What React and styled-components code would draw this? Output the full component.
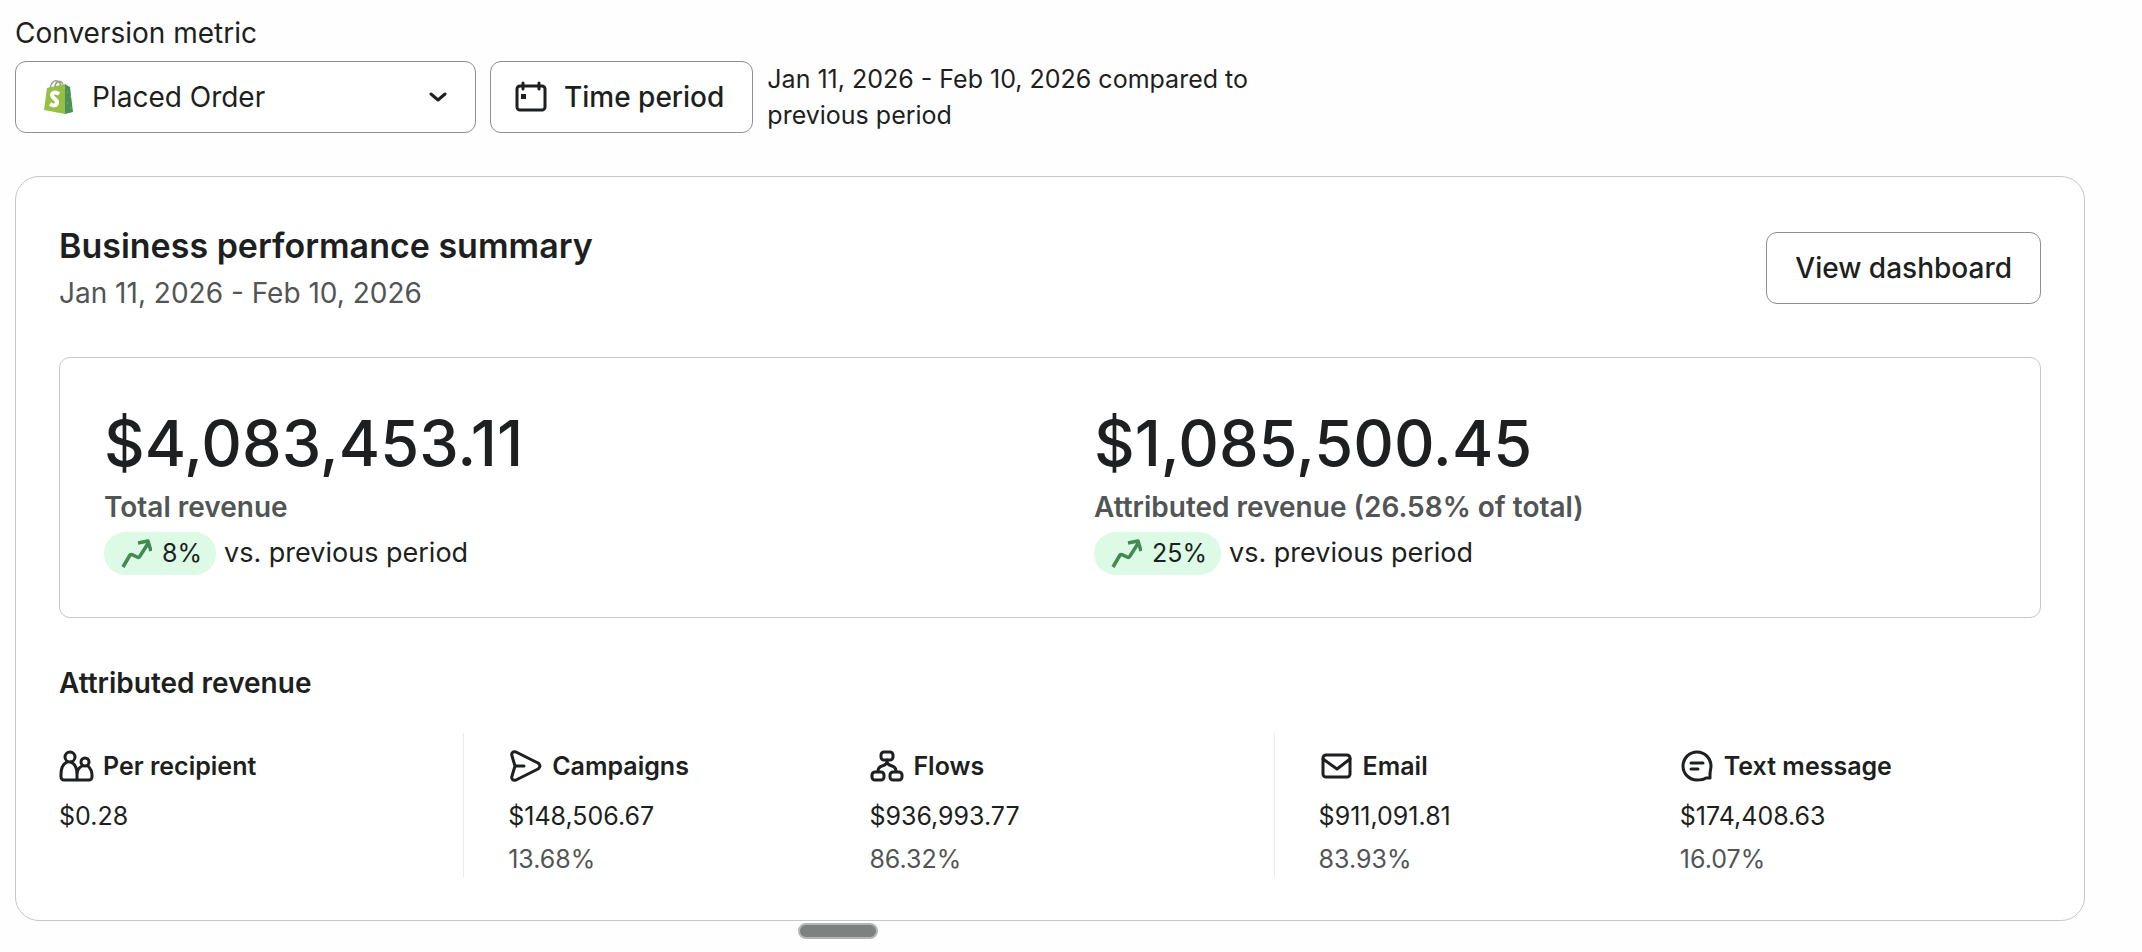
import React from 'react';
import styled, { createGlobalStyle } from 'styled-components';

const GlobalStyle = createGlobalStyle`
  *, *::before, *::after {
    box-sizing: border-box;
  }

  body {
    margin: 0;
    background: #fefefe;
    color: #1d1f20;
    font-family: Inter, 'Liberation Sans', sans-serif;
    font-size: 28px;
    line-height: 36px;
  }

  h1, h2, p, dl, dt, dd {
    margin: 0;
  }
`;

// Styled Components
const Page = styled.main`
  padding: 15px 57px 0 15px;
`;

const Toolbar = styled.div`
  display: flex;
  align-items: flex-end;
  gap: 14px;
`;

const Field = styled.div`
  display: flex;
  flex-direction: column;
  gap: 9px;
  width: 461px;
`;

const FieldLabel = styled.label`
  font-size: 28px;
  line-height: 37px;
`;

const SelectBox = styled.div`
  display: grid;
  grid-template-columns: 76px 1fr 62px;
  align-items: center;
  height: 72px;
  border: 1px solid #8d8f90;
  border-radius: 11px;
  background: #fff;
`;

const SelectIcon = styled.span`
  display: flex;
  grid-row: 1;
  grid-column: ${props => props.$column};
  padding-left: ${props => (props.$column === 3 ? '16px' : '0')};
  pointer-events: none;
`;

const Select = styled.select`
  grid-row: 1;
  grid-column: 1 / -1;
  height: 70px;
  padding: 0 62px 0 76px;
  border: 0;
  border-radius: 11px;
  background: transparent;
  color: inherit;
  font: inherit;
  appearance: none;
`;

const Button = styled.button`
  display: inline-flex;
  align-items: center;
  flex-shrink: 0;
  gap: 14px;
  height: 72px;
  padding: 0 28px 0 ${props => (props.$icon ? '19px' : '28px')};
  border: 1px solid #8d8f90;
  border-radius: 11px;
  background: #fff;
  color: inherit;
  font: inherit;
  font-weight: 500;
`;

const PeriodNote = styled.p`
  max-width: 520px;
  font-size: 25px;
  line-height: 36px;
`;

const Card = styled.section`
  margin-top: 43px;
  padding: 44px 43px 43px;
  border: 1px solid #c5c7c8;
  border-radius: 24px;
  background: #fff;
`;

const CardHeader = styled.header`
  display: flex;
  justify-content: space-between;
  align-items: center;
`;

const Title = styled.h1`
  font-size: 34px;
  font-weight: 600;
  line-height: 50px;
`;

const Subtitle = styled.p`
  font-size: 28px;
  line-height: 44px;
  color: #525556;
`;

const Totals = styled.div`
  display: grid;
  grid-template-columns: 1fr 1fr;
  margin-top: 42px;
  padding: 43px 0 40px;
  border: 1px solid #c5c7c8;
  border-radius: 11px;
`;

const Total = styled.div`
  padding-left: 44px;
`;

const Amount = styled.div`
  font-size: 63px;
  font-weight: 500;
  line-height: 84px;
`;

const AmountLabel = styled.div`
  font-size: 28px;
  font-weight: 600;
  line-height: 44px;
  color: #525556;
`;

const Trend = styled.div`
  display: flex;
  align-items: center;
  gap: 8px;
  height: 48px;
  font-size: 27px;
`;

const TrendBadge = styled.span`
  display: inline-flex;
  align-items: center;
  gap: 10px;
  height: 43px;
  padding: 0 14px 0 16px;
  border-radius: 22px;
  background: #dcfae5;
  font-size: 25px;
`;

const SectionTitle = styled.h2`
  margin-top: 44px;
  font-size: 28px;
  font-weight: 600;
  line-height: 42px;
`;

const Breakdown = styled.dl`
  display: flex;
  margin-top: 29px;
`;

const Channel = styled.div`
  flex: 1 1 0;
`;

const Divider = styled.div`
  width: 1px;
  margin: 0 44px 0 43px;
  background: #e9eaea;
`;

const ChannelName = styled.dt`
  display: flex;
  align-items: center;
  gap: 8px;
  height: 66px;
  font-size: 25px;
  font-weight: 600;
`;

const ChannelValue = styled.dd`
  font-size: 25px;
  line-height: 34px;
`;

const ChannelShare = styled.dd`
  && {
    margin-top: 8px;
  }
  font-size: 25px;
  line-height: 36px;
  color: #525556;
`;

const DragHandle = styled.div`
  width: 80px;
  height: 16px;
  margin: 2px 0 0 783px;
  border: 2px solid #b4b5b5;
  border-radius: 8px;
  background: #7f8181;
`;

// Icons
const LineIcon = ({ size = 36, children }) => (
  <svg
    width={size}
    height={size}
    viewBox={`0 0 ${size} ${size}`}
    fill="none"
    stroke="#1d1f20"
    strokeWidth="3"
    strokeLinecap="round"
    strokeLinejoin="round"
    aria-hidden="true"
  >
    {children}
  </svg>
);

const ShopifyIcon = () => (
  <svg width="60" height="36" viewBox="0 0 60 36" aria-hidden="true">
    <path d="M34 9c1-5 4-8 7-7 3 1 4 3 4 6M39 8c0-5 5-8 8-3" fill="none" stroke="#9aa38b" strokeWidth="1.5" />
    <path d="M31 9l18-4v30l-21-4z" fill="#95bf47" />
    <path d="M49 5l5 3 3 25-8 2z" fill="#4a9157" />
    <path d="M51 13h1M54 18h1M51 24h1M54 29h1" stroke="#95bf47" strokeWidth="1" />
    <path d="M43 15c-4-3-7-1-7 1 0 4 6 4 5 8-1 3-4 3-7 1" fill="none" stroke="#fff" strokeWidth="4" />
  </svg>
);

const ChevronIcon = () => (
  <svg width="18" height="10" viewBox="0 0 18 10" aria-hidden="true">
    <path d="M2 2l7 6 7-6" fill="none" stroke="#1d1f20" strokeWidth="3" strokeLinecap="round" strokeLinejoin="round" />
  </svg>
);

const CalendarIcon = () => (
  <LineIcon size={40}>
    <rect x="7" y="9" width="28" height="24" rx="3" />
    <path d="M13 6v6M29 6v6" />
    <path d="M11 17h5v5h-5z" fill="#1d1f20" stroke="none" />
  </LineIcon>
);

const TrendIcon = () => (
  <svg width="32" height="32" viewBox="0 0 32 32" fill="none" stroke="#428a52" strokeWidth="3.5" strokeLinejoin="round" aria-hidden="true">
    <path d="M3 30l7-12q1-1 3 0l4 2q2 1 3-1l9-14M18 6l10-2 3 10" />
  </svg>
);

const PeopleIcon = () => (
  <LineIcon>
    <circle cx="11" cy="9" r="5" />
    <circle cx="26" cy="14" r="4" />
    <path d="M8 14c-4 2-6 7-6 12v3a3 3 0 0 0 3 3h13V26c0-5-2-10-6-12M23 18c-4 2-5 5-5 9v5h12a3 3 0 0 0 3-3v-2c0-5-2-7-4-9" />
  </LineIcon>
);

const CampaignIcon = () => (
  <LineIcon>
    <path d="M4 8c-1-3 1-5 4-4l22 11q4 3 0 6L8 32c-3 1-5-1-4-4l3-10zM7 18h9" />
  </LineIcon>
);

const FlowIcon = () => (
  <LineIcon>
    <rect x="12" y="4" width="12" height="8" rx="3" />
    <rect x="3" y="24" width="12" height="8" rx="3" />
    <rect x="21" y="24" width="12" height="8" rx="3" />
    <path d="M18 12v2M9 23c0-3 1-4 4-5q4-1 5-4 1 3 5 4c3 1 4 2 4 5" />
  </LineIcon>
);

const EmailIcon = () => (
  <LineIcon>
    <rect x="4" y="7" width="27" height="22" rx="3" />
    <path d="M4 11l14 10 13-10" />
  </LineIcon>
);

const MessageIcon = () => (
  <LineIcon>
    <path d="M26 30c-3 2-5 2-9 2A14 14 0 1 1 31 18c0 3-1 5-1 8v4zM11 15h12M11 21h7" />
  </LineIcon>
);

// Data
const totals = [
  { amount: '$4,083,453.11', label: 'Total revenue', change: '8%' },
  { amount: '$1,085,500.45', label: 'Attributed revenue (26.58% of total)', change: '25%' }
];

const channels = [
  { name: 'Per recipient', icon: PeopleIcon, value: '$0.28' },
  { name: 'Campaigns', icon: CampaignIcon, value: '$148,506.67', share: '13.68%', divided: true },
  { name: 'Flows', icon: FlowIcon, value: '$936,993.77', share: '86.32%' },
  { name: 'Email', icon: EmailIcon, value: '$911,091.81', share: '83.93%', divided: true },
  { name: 'Text message', icon: MessageIcon, value: '$174,408.63', share: '16.07%' }
];

const App = () => (
  <Page>
    <GlobalStyle />
    <Toolbar>
      <Field>
        <FieldLabel htmlFor="metric">Conversion metric</FieldLabel>
        <SelectBox>
          <Select id="metric" defaultValue="placed">
            <option value="placed">Placed Order</option>
          </Select>
          <SelectIcon $column={1}>
            <ShopifyIcon />
          </SelectIcon>
          <SelectIcon $column={3}>
            <ChevronIcon />
          </SelectIcon>
        </SelectBox>
      </Field>
      <Button type="button" $icon>
        <CalendarIcon />
        Time period
      </Button>
      <PeriodNote>Jan 11, 2026 - Feb 10, 2026 compared to previous period</PeriodNote>
    </Toolbar>

    <Card>
      <CardHeader>
        <div>
          <Title>Business performance summary</Title>
          <Subtitle>Jan 11, 2026 - Feb 10, 2026</Subtitle>
        </div>
        <Button type="button">View dashboard</Button>
      </CardHeader>

      <Totals>
        {totals.map(total => (
          <Total key={total.label}>
            <Amount>{total.amount}</Amount>
            <AmountLabel>{total.label}</AmountLabel>
            <Trend>
              <TrendBadge>
                <TrendIcon />
                {total.change}
              </TrendBadge>
              vs. previous period
            </Trend>
          </Total>
        ))}
      </Totals>

      <SectionTitle>Attributed revenue</SectionTitle>
      <Breakdown>
        {channels.map(({ name, icon: Icon, value, share, divided }) => (
          <React.Fragment key={name}>
            {divided && <Divider />}
            <Channel>
              <ChannelName>
                <Icon />
                {name}
              </ChannelName>
              <ChannelValue>{value}</ChannelValue>
              {share && <ChannelShare>{share}</ChannelShare>}
            </Channel>
          </React.Fragment>
        ))}
      </Breakdown>
    </Card>
    <DragHandle />
  </Page>
);

export default App;
